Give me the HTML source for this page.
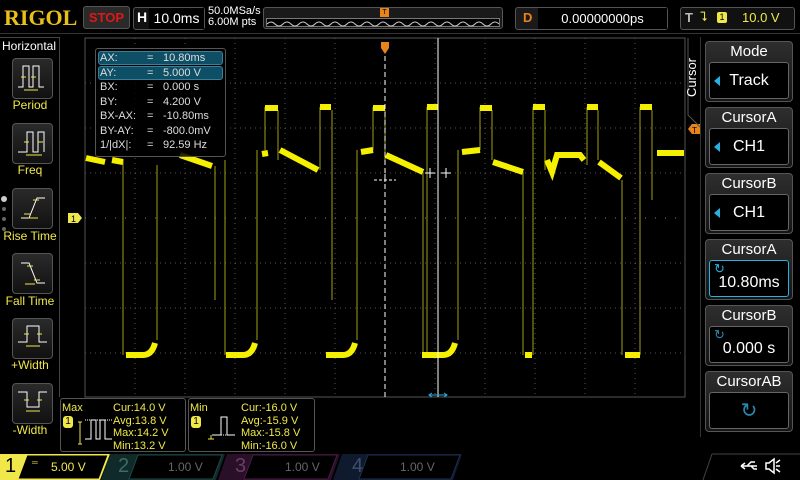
<!DOCTYPE html>
<html><head><meta charset="utf-8"><style>
*{margin:0;padding:0;box-sizing:border-box}
body{width:800px;height:480px;background:#000;overflow:hidden;position:relative;font-family:"Liberation Sans",sans-serif;color:#fff}
.a{position:absolute}
.lbtn{position:absolute;left:12px;width:41px;height:41px;border:1px solid #555;border-radius:4px;background:linear-gradient(#2a2a2a,#111)}
.llab{position:absolute;left:0;width:60px;text-align:center;color:#f0e84a;font-size:12px}
.rp{position:absolute;left:705px;width:88px;height:61px;border:1px solid #555;border-radius:4px;background:linear-gradient(#2e2e2e,#151515)}
.rp .t{position:absolute;top:1px;width:100%;text-align:center;font-size:15px;color:#fff}
.rp .in{position:absolute;left:3px;top:20px;width:80px;height:37px;border:1px solid #666;border-radius:3px;background:#000;text-align:center;font-size:16px;line-height:36px}
.tri{position:absolute;left:4px;top:13px;width:0;height:0;border-top:5px solid transparent;border-bottom:5px solid transparent;border-right:6px solid #2ab0e0}
.cv{font-size:11px;line-height:14.5px;color:#ddd}
.hl{background:#0e4f66;border:1px solid #3a7f99;border-radius:3px}
.ms{font-size:11px;line-height:12.5px;color:#f0e84a}
</style></head><body>
<div class="a" style="left:4px;top:5px;font-family:'Liberation Serif',serif;font-weight:bold;font-size:22px;color:#e8c01c">RIGOL</div>
<div class="a" style="left:83px;top:6px;width:47px;height:23px;border:1px solid #555;border-radius:3px;background:#2a2a2a;color:#e01818;font-weight:bold;font-size:13px;text-align:center;line-height:22px">STOP</div>
<div class="a" style="left:133px;top:7px;width:72px;height:23px;border:1px solid #555;border-radius:3px;background:#111"></div>
<div class="a" style="left:137px;top:9px;font-weight:bold;font-size:14px">H</div>
<div class="a" style="left:149px;top:8px;width:55px;height:21px;background:#000;font-size:14px;text-align:center;line-height:21px">10.0ms</div>
<div class="a" style="left:208px;top:6px;font-size:11px;line-height:11px">50.0MSa/s<br>6.00M pts</div>
<div class="a" style="left:263px;top:7px;width:240px;height:22px;border:1px solid #555;border-radius:3px;background:#1a1a1a"></div>
<div class="a" style="left:266px;top:18px;width:234px;height:9px;border:1px solid #777;background:#000"></div>
<svg class="a" style="left:267px;top:19px" width="232" height="8"><path d="M0 5 q4 -4 8 0 t8 0 t8 0 t8 0 t8 0 t8 0 t8 0 t8 0 t8 0 t8 0 t8 0 t8 0 t8 0 t8 0 t8 0 t8 0 t8 0 t8 0 t8 0 t8 0 t8 0 t8 0 t8 0 t8 0 t8 0 t8 0 t8 0 t8 0 t8 0" stroke="#ccc" fill="none" stroke-width="1"/></svg>
<div class="a" style="left:380px;top:8px;width:9px;height:9px;background:#e8841c;font-size:7px;color:#000;text-align:center;line-height:9px">T</div>
<div class="a" style="left:515px;top:7px;width:153px;height:23px;border:1px solid #555;border-radius:3px;background:#1a1a1a"></div>
<div class="a" style="left:523px;top:10px;color:#e8841c;font-weight:bold;font-size:13px">D</div>
<div class="a" style="left:538px;top:8px;width:129px;height:21px;background:#000;font-size:13px;text-align:center;line-height:21px">0.00000000ps</div>
<div class="a" style="left:680px;top:7px;width:115px;height:23px;border:1px solid #555;border-radius:3px;background:#111"></div>
<div class="a" style="left:685px;top:10px;color:#bbb;font-weight:bold;font-size:13px">T</div>
<div class="a" style="left:700px;top:9px;color:#f0e84a;font-size:13px">⮧</div>
<div class="a" style="left:717px;top:12px;width:10px;height:11px;background:#f0e84a;border-radius:2px;color:#000;font-size:9px;text-align:center;line-height:11px">1</div>
<div class="a" style="left:742px;top:10px;color:#f0e84a;font-size:13px">10.0 V</div>
<div class="a" style="left:0;top:33px;width:800px;height:1px;background:#333"></div>
<div class="a" style="left:0;top:37px;width:60px;height:360px;border-top:1px solid #444;border-right:1px solid #444"></div>
<div class="a" style="left:2px;top:39px;font-size:12px">Horizontal</div>
<div class="lbtn" style="top:58px"></div><div class="llab" style="top:98px">Period</div>
<div class="lbtn" style="top:123px"></div><div class="llab" style="top:163px">Freq</div>
<div class="lbtn" style="top:188px"></div><div class="llab" style="top:229px">Rise Time</div>
<div class="lbtn" style="top:253px"></div><div class="llab" style="top:294px">Fall Time</div>
<div class="lbtn" style="top:318px"></div><div class="llab" style="top:358px">+Width</div>
<div class="lbtn" style="top:383px"></div><div class="llab" style="top:423px">-Width</div>
<svg class="a" style="left:0;top:0" width="60" height="440" fill="none" stroke="#fff" stroke-width="1">
<path d="M18 87h5V66h6v21h4V66h6v21h5"/><path d="M21 77h5M31 77h5" stroke="#f0e84a"/><path d="M24 90h14" stroke="#f0e84a"/>
<path d="M18 152h9V132h6v20h5V132h6v20"/><path d="M24 142h5M38 142h5" stroke="#f0e84a"/><path d="M26 155h16" stroke="#f0e84a"/>
<path d="M21 218h8l8 -20h8"/><path d="M33 200h6M24 214h6M28 218h10" stroke="#f0e84a"/>
<path d="M21 263h8l8 20h8"/><path d="M27 266h6M34 280h6M25 284h10" stroke="#f0e84a"/>
<path d="M18 342h9V326h12v16h8"/><path d="M24 334h5M37 334h5M26 346h14" stroke="#f0e84a"/>
<path d="M18 392h9v15h12v-15h8"/><path d="M24 400h5M37 400h5M26 411h14" stroke="#f0e84a"/>
</svg>
<div class="a" style="left:1px;top:196px;width:6px;height:6px;border-radius:3px;background:#ccc"></div>
<div class="a" style="left:2px;top:207px;width:4px;height:4px;border-radius:2px;background:#666"></div>
<div class="a" style="left:2px;top:217px;width:4px;height:4px;border-radius:2px;background:#666"></div>
<div class="a" style="left:2px;top:227px;width:4px;height:4px;border-radius:2px;background:#666"></div>
<svg class="a" style="left:0;top:0" width="800" height="480">
<rect x="85" y="38" width="600" height="359" fill="none" stroke="#555" stroke-width="1"/>
<g stroke="#555" stroke-dasharray="1 4" stroke-width="1">
<path d="M135 38V397M185 38V397M235 38V397M285 38V397M335 38V397M435 38V397M485 38V397M535 38V397M585 38V397M635 38V397"/>
<path d="M85 83H685M85 128H685M85 173H685M85 263H685M85 308H685M85 353H685"/>
</g>
<path d="M85 218H685" stroke="#777" stroke-dasharray="1 9"/>
<g stroke="#a0a018" stroke-width="1" fill="none">
<path d="M123 160V355M157 340V165M215 166V300M225 160V355M257 340V150M265 150V107M278 110V160M320 170V107M332 110V300M357 340V150M373 150V107M385 110V160M423 172V355M427 355V107M438 110V320M458 340V150M480 150V107M492 110V160M523 172V355M533 355V107M545 110V170M587 165V107M598 110V160M622 180V355M640 355V107M652 110V200"/>
</g>
<g stroke="#f4f000" stroke-width="6" fill="none">
<path d="M86 158L105 162M112 160L123 162M180 155L212 166M262 154L268 153M265 108H278M280 150L318 170M320 107H331M361 152L373 150M373 108H385M386 155L423 172M427 107H438M462 152L480 150M480 108H492M493 162L523 172M533 107H545M547 160L552 172L557 155H580L584 160M587 107H598M599 162L621 178M640 107H652M657 153H684"/>
<path d="M126 355H143Q152 355 155 343M226 355H243Q252 355 255 343M326 355H343Q352 355 355 343M422 355H443Q452 355 455 343M525 355H532M625 355H640"/>
</g>
<path d="M385 48V397" stroke="#fff" stroke-dasharray="5 3"/>
<path d="M438 38V397" stroke="#fff"/>
<g stroke="#fff" fill="none"><path d="M425 173h10M430 168v10M441 173h10M446 168v10"/><path d="M374 180h22M385 174v12" stroke-dasharray="3 2"/></g>
<path d="M381 42h8v6l-4 6l-4-6z" fill="#e8841c"/>
<path d="M432 393l-3 2l3 2M444 393l3 2l-3 2M429 395h18" stroke="#2ab0e0" fill="none"/>
<path d="M68 213h10l4 5l-4 5h-10z" fill="#f0e84a"/><text x="71" y="222" font-size="9" font-family="Liberation Sans" fill="#000">1</text>
<path d="M700 124h-8l-4 5l4 5h8z" fill="#e8841c"/><text x="692" y="133" font-size="8" font-family="Liberation Sans" fill="#000">T</text>
<path d="M688 38V115l12 12" stroke="#555" fill="none"/>
<g stroke="#fff" fill="none" stroke-width="1.5"><path d="M741 466h16M741 466l4-3M741 466l4 3M747 466l4-4h4M751 466l3 3h3"/><path d="M766 463h3l5-4v14l-5-4h-3z"/><path d="M776 463l4-3M776 469l4 3M776 466h4"/></g>
</svg>
<div class="a" style="left:95px;top:48px;width:131px;height:109px;border:1px solid #555;border-radius:3px;background:rgba(0,0,0,.85)"></div>
<div class="a hl" style="left:98px;top:51px;width:125px;height:14px"></div>
<div class="a hl" style="left:98px;top:66px;width:125px;height:14px"></div>
<div class="a cv" style="left:100px;top:51px">AX:<br>AY:<br>BX:<br>BY:<br>BX-AX:<br>BY-AY:<br>1/|dX|:</div>
<div class="a cv" style="left:147px;top:51px">=<br>=<br>=<br>=<br>=<br>=<br>=</div>
<div class="a cv" style="left:163px;top:51px">10.80ms<br>5.000 V<br>0.000 s<br>4.200 V<br>-10.80ms<br>-800.0mV<br>92.59 Hz</div>
<div class="a" style="left:700px;top:37px;width:100px;height:400px;border-left:1px solid #333"></div>
<div class="a" style="left:684px;top:97px;transform:rotate(-90deg);transform-origin:left top;font-size:13px;width:60px">Cursor</div>
<div class="rp" style="top:41px"><div class="t">Mode</div><div class="in">Track<div class="tri"></div></div></div>
<div class="rp" style="top:107px"><div class="t">CursorA</div><div class="in">CH1<div class="tri"></div></div></div>
<div class="rp" style="top:173px"><div class="t">CursorB</div><div class="in">CH1<div class="tri"></div></div></div>
<div class="rp" style="top:239px"><div class="t">CursorA</div><div class="in" style="border-color:#2ab0e0;line-height:44px">10.80ms<span class="a" style="left:4px;top:-14px;color:#2ab0e0;font-size:13px">↻</span></div></div>
<div class="rp" style="top:305px"><div class="t">CursorB</div><div class="in" style="line-height:44px">0.000 s<span class="a" style="left:4px;top:-14px;color:#2a8ab0;font-size:13px">↻</span></div></div>
<div class="rp" style="top:371px"><div class="t">CursorAB</div><div class="in" style="color:#2a8ab0;font-size:20px">↻</div></div>
<div class="a" style="left:60px;top:398px;width:126px;height:54px;border:1px solid #555;border-radius:3px"></div>
<div class="a" style="left:188px;top:398px;width:127px;height:54px;border:1px solid #555;border-radius:3px"></div>
<div class="a ms" style="left:62px;top:402px">Max</div>
<div class="a ms" style="left:190px;top:402px">Min</div>
<div class="a" style="left:63px;top:416px;width:10px;height:12px;background:#f0e84a;border-radius:3px;color:#000;font-size:10px;text-align:center;line-height:12px">1</div>
<div class="a" style="left:191px;top:416px;width:10px;height:12px;background:#f0e84a;border-radius:3px;color:#000;font-size:10px;text-align:center;line-height:12px">1</div>
<svg class="a" style="left:60px;top:398px" width="260" height="54" fill="none" stroke="#fff"><path d="M25 41h6V22h5v19h4V22h5v19h7"/><path d="M20 24v22M18 24h4M18 46h4" stroke="#f0e84a"/><path d="M25 22h27" stroke="#fff" stroke-dasharray="1 1"/>
<path d="M152 37h9V19h6v18h8"/><path d="M161 37h14" stroke-dasharray="1 1"/><path d="M148 41h6M151 37v4" stroke="#f0e84a"/></svg>
<div class="a ms" style="left:113px;top:402px">Cur:14.0 V<br>Avg:13.8 V<br>Max:14.2 V<br>Min:13.2 V</div>
<div class="a ms" style="left:241px;top:402px">Cur:-16.0 V<br>Avg:-15.9 V<br>Max:-15.8 V<br>Min:-16.0 V</div>
<svg class="a" style="left:0;top:453px" width="800" height="27">
<path d="M0 1H110L100 27H0z" fill="#f0e84a"/>
<path d="M27 2H108L99 26H18z" fill="#000" stroke="#f0e84a"/>
<path d="M110 1H225L216 27H101z" fill="#0f2a28"/><path d="M138 2H222L213 26H129z" fill="#000" stroke="#1c4a48"/>
<path d="M227 1H340L331 27H218z" fill="#2a0f28"/><path d="M253 2H337L328 26H244z" fill="#000" stroke="#4a1c48"/>
<path d="M342 1H462L453 27H333z" fill="#0f1a2e"/><path d="M368 2H460L451 26H359z" fill="#000" stroke="#1c3050"/>
<path d="M712 1H800" stroke="#444"/><path d="M712 1L703 27" stroke="#444"/>
</svg>
<div class="a" style="left:5px;top:455px;font-size:20px;color:#000">1</div>
<div class="a" style="left:51px;top:460px;font-size:12px;color:#f0e84a">5.00 V</div>
<div class="a" style="left:118px;top:455px;font-size:20px;color:#3d6b68">2</div>
<div class="a" style="left:168px;top:460px;font-size:12px;color:#666">1.00 V</div>
<div class="a" style="left:235px;top:455px;font-size:20px;color:#6a3d68">3</div>
<div class="a" style="left:285px;top:460px;font-size:12px;color:#666">1.00 V</div>
<div class="a" style="left:352px;top:455px;font-size:20px;color:#3d4f6b">4</div>
<div class="a" style="left:400px;top:460px;font-size:12px;color:#666">1.00 V</div>
<div class="a" style="left:32px;top:458px;font-size:8px;color:#f0e84a">═</div>
</body></html>
